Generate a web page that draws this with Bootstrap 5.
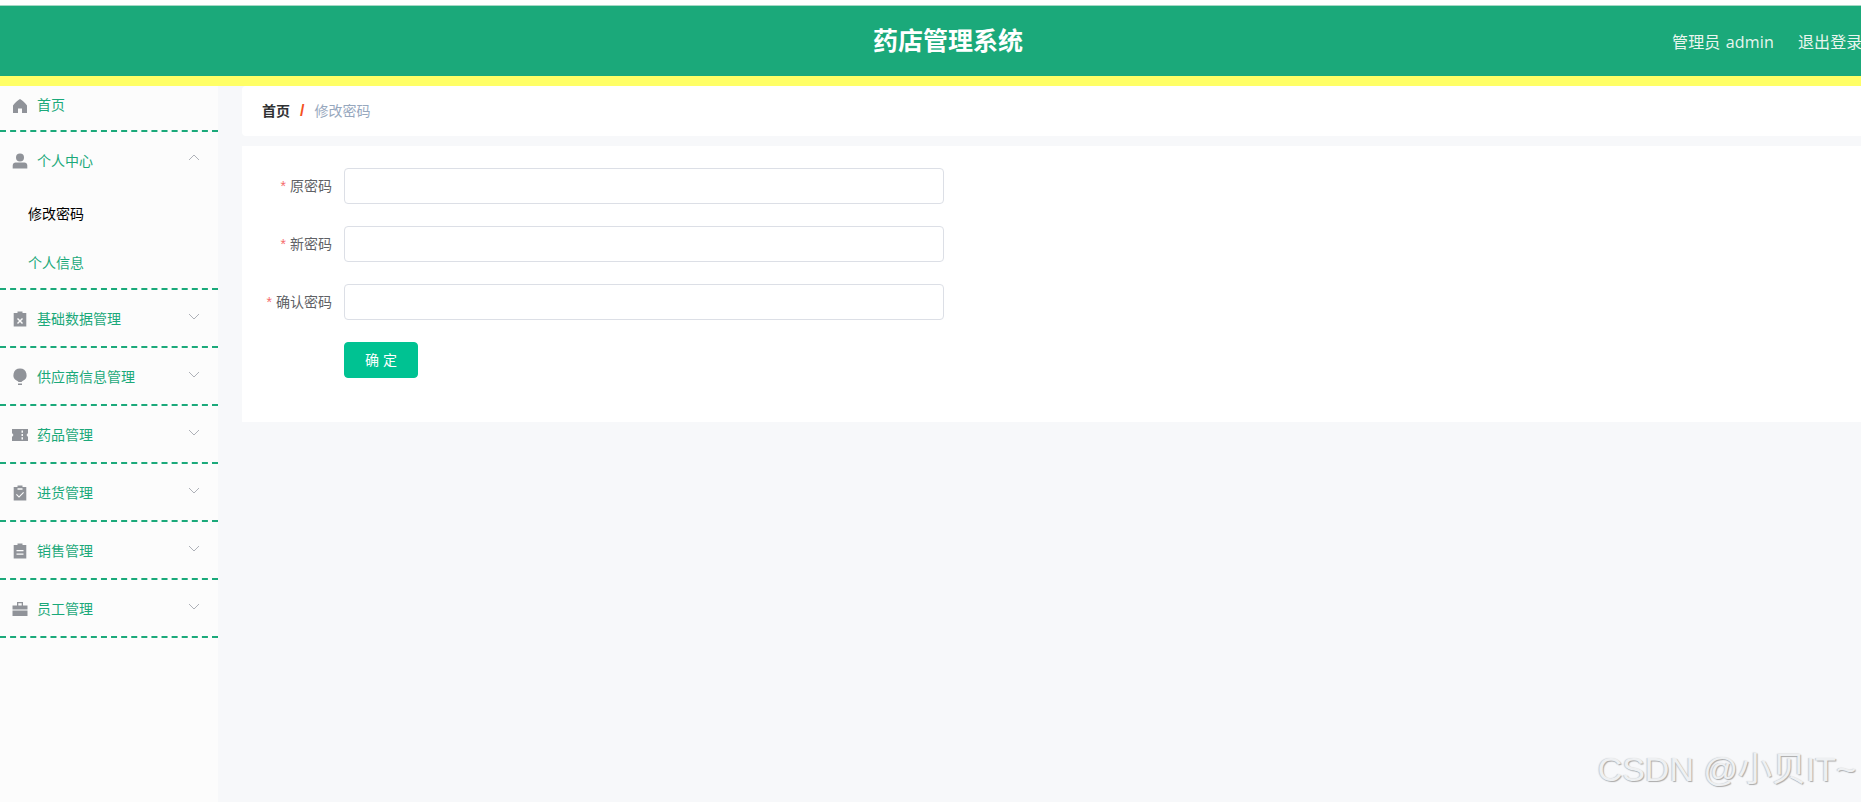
<!DOCTYPE html>
<html lang="zh-CN">
<head>
    <meta charset="UTF-8">
    <meta name="viewport" content="width=device-width, initial-scale=1.0">
    <title>药店管理系统</title>
    <link href="https://cdn.jsdelivr.net/npm/bootstrap@5.3.0/dist/css/bootstrap.min.css" rel="stylesheet">
    <style>
        html, body {
            height: 100%;
            overflow: hidden;
        }
        body {
            background-color: #f7f8fa;
            font-family: "Liberation Sans", "Noto Sans CJK SC", sans-serif;
            font-size: 14px;
            position: relative;
        }
        .top-strip {
            background-color: #fff;
            height: 5px;
        }
        .app-header {
            background-color: #1ba97a;
            border-top: 1px solid #a5d9c5;
            border-bottom: 10px solid #ffff66;
            color: #fff;
            height: 81px;
            padding-top: 2px;
        }
        .app-title {
            font-size: 25px;
            font-weight: 700;
            margin-left: 873px;
            white-space: nowrap;
        }
        .app-user {
            font-family: "Open Sans", "Noto Sans CJK SC", sans-serif;
            font-size: 16px;
            color: #e9f5ee;
            margin-left: 649px;
            white-space: nowrap;
            gap: 24px;
            word-spacing: 1px;
            letter-spacing: .15px;
        }
        .app-body {
            height: calc(100% - 86px);
        }
        .side-menu {
            width: 218px;
            flex: none;
            background-color: #fcfcfc;
        }
        .menu-head {
            height: 58px;
            color: #1ba97a;
            padding: 2px 18px 0 12px;
            gap: 9px;
        }
        .menu-line {
            border-bottom: 2px dashed #1ba97a;
        }
        .menu-head svg.ico {
            width: 16px;
            height: 16px;
            fill: #909399;
            flex: none;
            overflow: visible;
        }
        .menu-head .arrow {
            width: 12px;
            height: 12px;
            fill: none;
            stroke: #aeb1b8;
            stroke-width: 1;
            margin-left: auto;
            margin-top: -6px;
        }
        .first-head {
            height: 46px;
            padding-top: 0;
            padding-bottom: 5px;
        }
        .open-head {
            padding-top: 0;
        }
        .sub-item {
            height: 50px;
            padding-left: 28px;
            padding-bottom: 2px;
            color: #1ba97a;
        }
        .sub-active {
            color: #000;
        }
        .main-area {
            margin-left: 24px;
            flex: 1;
            min-width: 0;
        }
        .crumb-bar {
            background-color: #fff;
            height: 50px;
            padding-left: 20px;
            border-radius: 4px 0 0 4px;
            margin-bottom: 10px;
            color: #97a8be;
        }
        .crumb-bar b {
            color: #303133;
        }
        .crumb-bar i {
            color: #f4511e;
            font-size: 16px;
            font-weight: 700;
            font-style: normal;
            margin: 0 10px;
        }
        .form-panel {
            background-color: #fff;
            height: 276px;
            padding-top: 22px;
        }
        .form-line {
            height: 36px;
            margin-bottom: 22px;
        }
        .form-line label {
            width: 90px;
            margin-right: 12px;
            text-align: right;
            color: #606266;
            flex: none;
        }
        .form-line label em {
            color: #f56c6c;
            font-style: normal;
            margin-right: 4px;
        }
        .form-line input {
            width: 600px;
            height: 36px;
            border: 1px solid #dcdfe6;
            border-radius: 4px;
        }
        .save-btn {
            background-color: #00c292;
            border-color: #00c292;
            color: #fff;
            width: 74px;
            height: 36px;
            font-size: 14px;
            padding: 0;
            margin-left: 102px;
            border-radius: 4px;
        }
        .csdn-mark {
            position: absolute;
            right: 5px;
            bottom: 16px;
            font-size: 34px;
            color: #eef0f2;
            text-shadow: 1px 1px 1px #aaa, -1px 0 1px #ccc;
            white-space: nowrap;
            line-height: 1;
        }
    </style>
</head>
<body>
    <div class="top-strip"></div>
    <header class="app-header d-flex align-items-center">
        <div class="app-title">药店管理系统</div>
        <div class="app-user d-flex">
            <span>管理员 admin</span>
            <span>退出登录</span>
        </div>
    </header>
    <div class="app-body d-flex">
        <aside class="side-menu">
            <div class="menu-head menu-line first-head d-flex align-items-center">
                <svg class="ico" viewBox="0 0 16 16"><path d="M8 1C5.500 2.500 3 4.500 1 7.500V15h5v-4.500h4V15h5V7.500C13 4.500 10.500 2.500 8 1z"/></svg>
                <span>首页</span>
            </div>
            <div class="menu-head open-head d-flex align-items-center">
                <svg class="ico" viewBox="0 0 16 16"><circle cx="8" cy="4.500" r="4"/><path d="M.7 15.500v-3c0-2 1.300-3 3-3h8.600c1.700 0 3 1 3 3v3z"/></svg>
                <span>个人中心</span>
                <svg class="arrow" viewBox="0 0 12 12"><path d="M1 8l5-5 5 5"/></svg>
            </div>
            <div class="sub-item sub-active d-flex align-items-center">修改密码</div>
            <div class="sub-item menu-line d-flex align-items-center">个人信息</div>
            <div class="menu-head menu-line d-flex align-items-center">
                <svg class="ico" viewBox="0 0 16 16"><path fill-rule="evenodd" d="M5.500.5h5v1.500h3.800v13.500H1.700V2h3.800zM6 7L5 8l2 2-2 2 1 1 2-2 2 2 1-1-2-2 2-2-1-1-2 2z"/></svg>
                <span>基础数据管理</span>
                <svg class="arrow" viewBox="0 0 12 12"><path d="M1 4l5 5 5-5"/></svg>
            </div>
            <div class="menu-head menu-line d-flex align-items-center">
                <svg class="ico" viewBox="0 0 16 16"><path d="M8-.5a6.500 6.500 0 0 1 3 12.300c-.6.300-1.200.7-1.500 1.200h-3c-.3-.5-.9-.9-1.500-1.200A6.500 6.500 0 0 1 8-.5zM6 14.500h4v1.500H6z"/></svg>
                <span>供应商信息管理</span>
                <svg class="arrow" viewBox="0 0 12 12"><path d="M1 4l5 5 5-5"/></svg>
            </div>
            <div class="menu-head menu-line d-flex align-items-center">
                <svg class="ico" viewBox="0 0 16 16"><path fill-rule="evenodd" d="M0 2h16v4l-1.500 2L16 10v4H0v-4l1.500-2L0 6zM9.500 3.500v2.300h1.500V3.500zM9.500 6.900v2.200h1.500V6.900zM9.500 10.200v2.300h1.500v-2.300z"/></svg>
                <span>药品管理</span>
                <svg class="arrow" viewBox="0 0 12 12"><path d="M1 4l5 5 5-5"/></svg>
            </div>
            <div class="menu-head menu-line d-flex align-items-center">
                <svg class="ico" viewBox="0 0 16 16"><path fill-rule="evenodd" d="M5.500.5h5v1.500h3.800v13.500H1.700V2h3.800zM5.500 3.200v1.500h5V3.200zM4.800 9l-.8.800L7 12.800l5-5-.8-.8L7 11.200z"/></svg>
                <span>进货管理</span>
                <svg class="arrow" viewBox="0 0 12 12"><path d="M1 4l5 5 5-5"/></svg>
            </div>
            <div class="menu-head menu-line d-flex align-items-center">
                <svg class="ico" viewBox="0 0 16 16"><path fill-rule="evenodd" d="M5.500.5h5v1.500h3.800v13.500H1.700V2h3.800zM4.500 7v1.300h7V7zM4.500 10.500v1.300h7v-1.300z"/></svg>
                <span>销售管理</span>
                <svg class="arrow" viewBox="0 0 12 12"><path d="M1 4l5 5 5-5"/></svg>
            </div>
            <div class="menu-head menu-line d-flex align-items-center">
                <svg class="ico" viewBox="0 0 16 16"><path fill-rule="evenodd" d="M5 1h6v3.500h4.500v4H.5v-4H5zM6.300 2.300v2.200h3.400V2.300zM.5 9.500h15V15H.5z"/></svg>
                <span>员工管理</span>
                <svg class="arrow" viewBox="0 0 12 12"><path d="M1 4l5 5 5-5"/></svg>
            </div>
        </aside>
        <main class="main-area">
            <nav class="crumb-bar d-flex align-items-center">
                <b>首页</b><i>/</i><span>修改密码</span>
            </nav>
            <form class="form-panel">
                <div class="form-line d-flex align-items-center">
                    <label><em>*</em>原密码</label>
                    <input type="password" class="form-control">
                </div>
                <div class="form-line d-flex align-items-center">
                    <label><em>*</em>新密码</label>
                    <input type="password" class="form-control">
                </div>
                <div class="form-line d-flex align-items-center">
                    <label><em>*</em>确认密码</label>
                    <input type="password" class="form-control">
                </div>
                <button type="button" class="btn save-btn">确 定</button>
            </form>
        </main>
    </div>
    <div class="csdn-mark">CSDN @小贝IT~</div>
    <script src="https://cdn.jsdelivr.net/npm/bootstrap@5.3.0/dist/js/bootstrap.bundle.min.js"></script>
</body>
</html>
